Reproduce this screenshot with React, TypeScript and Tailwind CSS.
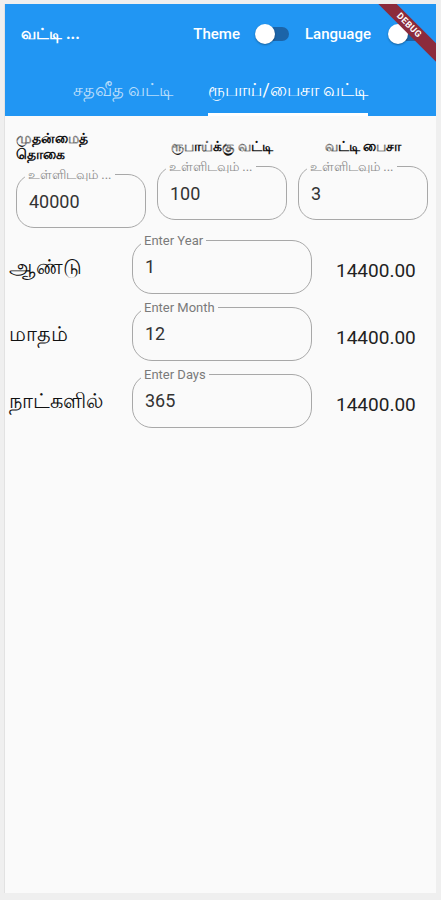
import React from "react"

const font = { fontFamily: "Roboto, 'Noto Sans', 'DejaVu Sans', sans-serif" }

const Switch = () => (
  <div className="relative w-[34px] h-[20px] flex items-center shrink-0">
    <div className="absolute left-[10px] w-[24px] h-[14px] rounded-full bg-[#1c64a8]" />
    <div className="absolute left-0 w-[20px] h-[20px] rounded-full bg-white shadow-[0_1px_2px_rgba(0,0,0,0.35)]" />
  </div>
)

const Outlined = ({
  label,
  value,
  className,
  labelClass,
  valueClass,
}: {
  label: string
  value: string
  className: string
  labelClass: string
  valueClass: string
}) => (
  <fieldset className={`border border-[#a8a8a8] ${className} flex items-center px-[12px]`}>
    <legend className={`-ml-[4px] px-[3px] leading-none ${labelClass}`}>{label}</legend>
    <span className={`text-[18px] text-[#333] ${valueClass}`}>{value}</span>
  </fieldset>
)

const rows = [
  { name: "ஆண்டு", label: "Enter Year", value: "1" },
  { name: "மாதம்", label: "Enter Month", value: "12" },
  { name: "நாட்களில்", label: "Enter Days", value: "365" },
]

const cols = [
  { t: ["முதன்மைத்", "தொகை"], v: "40000", align: "text-left" },
  { t: ["ரூபாய்க்கு வட்டி"], v: "100", align: "text-center" },
  { t: ["வட்டி பைசா"], v: "3", align: "text-center" },
]

export default function App() {
  return (
    <div className="w-[441px] h-[900px] bg-[#efefef] pt-[4px] pl-[4px] pr-[5px] pb-[7px]" style={font}>
      <div className="relative h-full bg-[#fafafa] overflow-hidden border-l border-[#e2e2e2]">
        <div className="bg-[#2196f3] text-white">
          <div className="h-[60px] flex items-center pl-[16px] pr-[14px]">
            <div className="text-[16px] font-bold flex-1">வட்டி ...</div>
            <div className="text-[15px] font-medium mr-[15px]">Theme</div>
            <Switch />
            <div className="text-[15px] font-medium ml-[16px] mr-[17px]">Language</div>
            <Switch />
          </div>
          <div className="h-[52px] flex justify-center items-stretch gap-[35px]">
            <div className="flex items-center text-[17.5px] text-white/70">சதவீத வட்டி</div>
            <div className="relative flex items-center text-[17.5px]">
              ரூபாய்/பைசா வட்டி
              <div className="absolute left-0 right-0 bottom-0 h-[3px] bg-white" />
            </div>
          </div>
        </div>

        <div className="flex items-center gap-[11px] pl-[11px] pt-[14px]">
          {cols.map((c) => (
            <div key={c.v} className="w-[130px] flex flex-col">
              <div className={`text-[14px] font-semibold leading-[16px] text-[#111] ${c.align} mb-[6px]`}>
                {c.t.map((l) => (
                  <div key={l}>{l}</div>
                ))}
              </div>
              <Outlined
                label="உள்ளிடவும் ..."
                value={c.v}
                className="h-[60px] rounded-[18px]"
                labelClass="text-[13px] text-[#8a8a8a]"
                valueClass="mt-[7px]"
              />
            </div>
          ))}
        </div>

        <div className="flex flex-col gap-[7px] mt-[6px]">
          {rows.map((r) => (
            <div key={r.name} className="flex items-center pl-[4px]">
              <div className="w-[123px] text-[21px] font-medium text-[#111] pt-[8px]">{r.name}</div>
              <Outlined
                label={r.label}
                value={r.value}
                className="w-[180px] h-[60px] rounded-[20px]"
                labelClass="text-[13px] text-[#7a7a7a]"
                valueClass="-mt-[8px]"
              />
              <div className="ml-[24px] text-[19px] text-[#222] pt-[14px]">14400.00</div>
            </div>
          ))}
        </div>

        <div className="absolute left-[344px] top-[15px] w-[120px] h-[13px] rotate-45 bg-[#8c2b3c] flex items-center justify-center">
          <span className="text-white text-[9px] font-bold tracking-[0.5px] leading-none">DEBUG</span>
        </div>
      </div>
    </div>
  )
}
